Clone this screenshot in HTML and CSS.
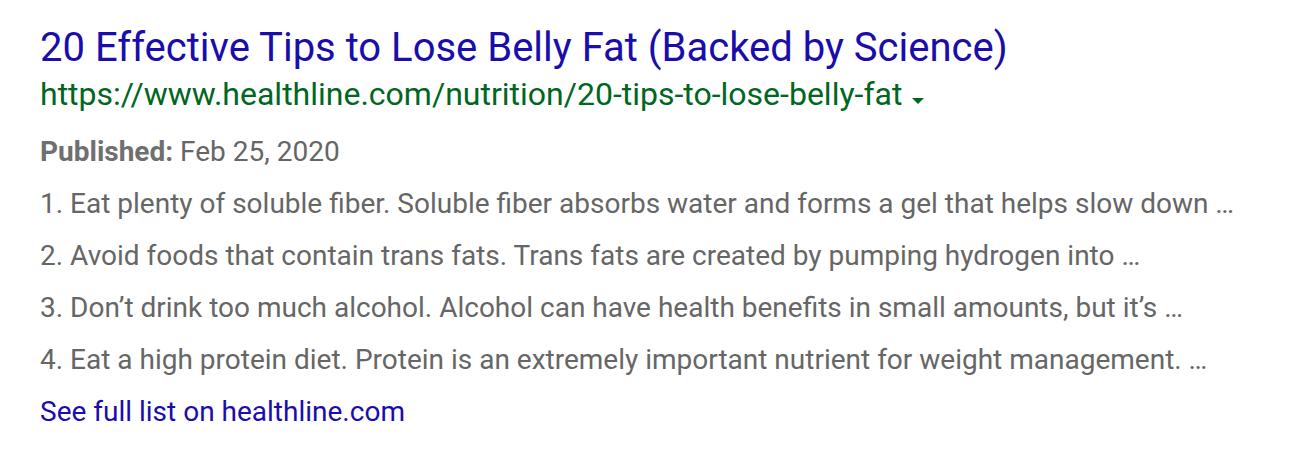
FILE: index.html
```html
<!DOCTYPE html>
<html>
<head>
<meta charset="utf-8">
<link rel="stylesheet" href="styles.css">
</head>
<body>
<div class="result">
  <a class="title" href="#">20 Effective Tips to Lose Belly Fat (Backed by Science)</a>
  <div class="url-row">
    <span class="url">https://www.healthline.com/nutrition/20-tips-to-lose-belly-fat</span>
    <svg class="caret" width="12" height="6" viewBox="0 0 12 6"><path d="M0 0H12L6 6Z" fill="#006621"/></svg>
  </div>
  <div class="snippet">
    <div class="line"><span class="label">Published:</span> Feb 25, 2020</div>
    <div class="line">1. Eat plenty of soluble fiber. Soluble fiber absorbs water and forms a gel that helps slow down …</div>
    <div class="line">2. Avoid foods that contain trans fats. Trans fats are created by pumping hydrogen into …</div>
    <div class="line">3. Don’t drink too much alcohol. Alcohol can have health benefits in small amounts, but it’s …</div>
    <div class="line">4. Eat a high protein diet. Protein is an extremely important nutrient for weight management. …</div>
    <a class="line more" href="#">See full list on healthline.com</a>
  </div>
</div>
</body>
</html>
```

FILE: styles.css
```css
html, body {
  margin: 0;
  padding: 0;
  background: #ffffff;
}
body {
  font-family: Roboto, "Noto Sans", Arial, sans-serif;
}
.result {
  padding: 24px 0 0 40px;
  display: flex;
  flex-direction: column;
}
.title {
  color: #1a0dab;
  font-size: 40px;
  line-height: 48px;
  text-decoration: none;
}
.url-row {
  display: flex;
  align-items: flex-start;
  gap: 10px;
  height: 40px;
  margin-top: 2px;
}
.url {
  color: #006621;
  font-size: 32px;
  line-height: 40px;
}
.caret {
  margin-top: 24px;
}
.snippet {
  display: flex;
  flex-direction: column;
  margin-top: 12px;
  color: #666666;
  font-size: 28px;
  line-height: 52px;
}
.label {
  font-weight: bold;
  color: #6f6f6f;
}
.line {
  white-space: nowrap;
}
.more {
  color: #1a0dab;
  text-decoration: none;
}
```
